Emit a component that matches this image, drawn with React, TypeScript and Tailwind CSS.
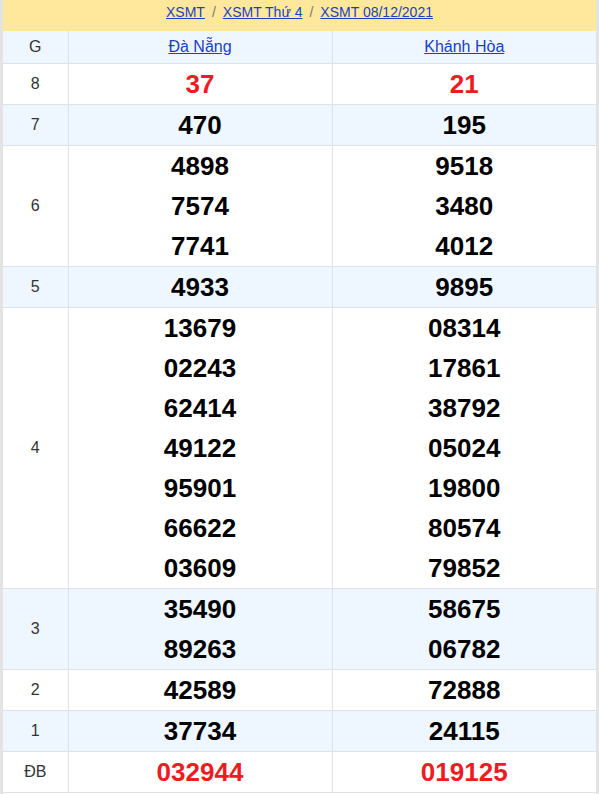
import React from 'react';

interface Prize {
  label: string;
  a: string[];
  b: string[];
  red?: boolean;
}

const prizes: Prize[] = [
  { label: '8', a: ['37'], b: ['21'], red: true },
  { label: '7', a: ['470'], b: ['195'] },
  { label: '6', a: ['4898', '7574', '7741'], b: ['9518', '3480', '4012'] },
  { label: '5', a: ['4933'], b: ['9895'] },
  {
    label: '4',
    a: ['13679', '02243', '62414', '49122', '95901', '66622', '03609'],
    b: ['08314', '17861', '38792', '05024', '19800', '80574', '79852'],
  },
  { label: '3', a: ['35490', '89263'], b: ['58675', '06782'] },
  { label: '2', a: ['42589'], b: ['72888'] },
  { label: '1', a: ['37734'], b: ['24115'] },
  { label: 'ĐB', a: ['032944'], b: ['019125'], red: true },
];

function Numbers({ items, red }: { items: string[]; red?: boolean }) {
  return (
    <div className="flex flex-col items-center">
      {items.map((n, i) => (
        <span
          key={i}
          className={`h-10 leading-10 text-[26px] font-bold ${red ? 'text-[#ed1c24]' : 'text-black'}`}
        >
          {n}
        </span>
      ))}
    </div>
  );
}

export default function App() {
  return (
    <div className="w-[599px] min-h-[794px] bg-white border-x-[3px] border-[#e3e3e3] font-['Liberation_Sans',Arial,sans-serif]">
      <div className="h-[31px] bg-[#ffe89c] flex items-center justify-center gap-[7px] text-[14px] pb-[6px]">
        <a href="#" className="text-[#1a3fc4] underline">XSMT</a>
        <span className="text-[#777]">/</span>
        <a href="#" className="text-[#1a3fc4] underline">XSMT Thứ 4</a>
        <span className="text-[#777]">/</span>
        <a href="#" className="text-[#1a3fc4] underline">XSMT 08/12/2021</a>
      </div>
      <table className="w-full border-collapse">
        <thead>
          <tr className="h-[32px] bg-[#eef6ff] border-b border-[#dde2e8]">
            <th className="w-[65px] font-normal text-[16px] text-[#333] border-r border-[#dde2e8]">G</th>
            <th className="w-[264px] font-normal text-[16px] border-r border-[#dde2e8]">
              <a href="#" className="text-[#1a3fc4] underline">Đà Nẵng</a>
            </th>
            <th className="font-normal text-[16px]">
              <a href="#" className="text-[#1a3fc4] underline">Khánh Hòa</a>
            </th>
          </tr>
        </thead>
        <tbody>
          {prizes.map((p, i) => (
            <tr
              key={p.label}
              className={`border-b border-[#dde2e8] ${i % 2 === 1 ? 'bg-[#eef6ff]' : 'bg-white'}`}
            >
              <td className="text-center text-[16px] text-[#333] border-r border-[#dde2e8] p-0">{p.label}</td>
              <td className="border-r border-[#dde2e8] p-0">
                <Numbers items={p.a} red={p.red} />
              </td>
              <td className="p-0">
                <Numbers items={p.b} red={p.red} />
              </td>
            </tr>
          ))}
        </tbody>
      </table>
    </div>
  );
}
